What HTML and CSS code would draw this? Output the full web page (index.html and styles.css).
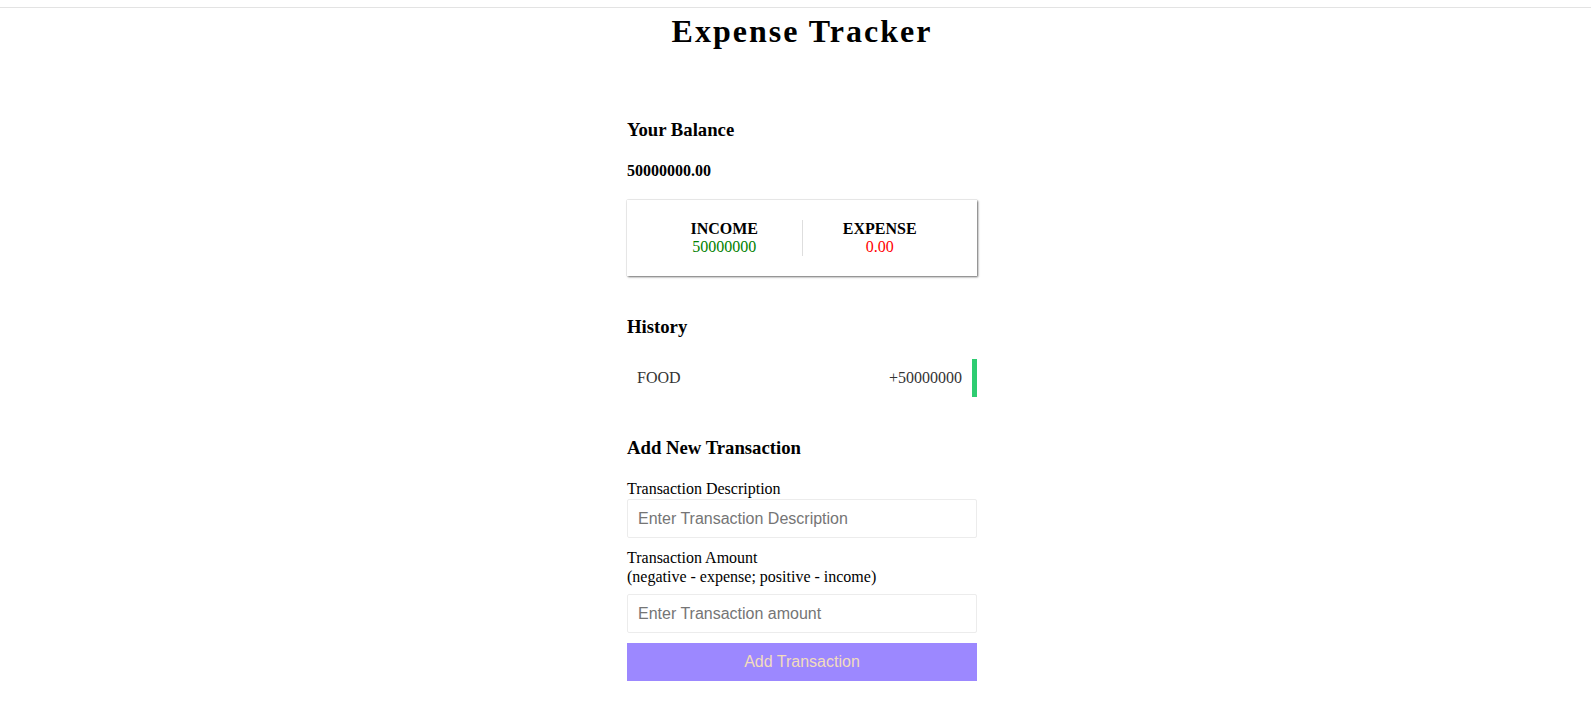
FILE: index.html
```html
<!DOCTYPE html>
<html lang="en">
<head>
<meta charset="utf-8">
<title>Expense Tracker</title>
<link rel="stylesheet" href="styles.css">
</head>
<body>
<div class="top-rule"></div>
<div class="app">
  <h2 class="title">Expense Tracker</h2>
  <div class="container">
    <h3 class="section-title first">Your Balance</h3>
    <h4 class="balance">50000000.00</h4>

    <div class="inc-exp">
      <div class="inc-exp-item with-divider">
        <div class="inc-exp-label">INCOME</div>
        <div class="money plus">50000000</div>
      </div>
      <div class="inc-exp-item">
        <div class="inc-exp-label">EXPENSE</div>
        <div class="money minus">0.00</div>
      </div>
    </div>

    <h3 class="section-title">History</h3>
    <ul class="list">
      <li class="list-item plus"><span>FOOD</span><span>+50000000</span></li>
    </ul>

    <h3 class="section-title">Add New Transaction</h3>
    <form class="form">
      <div class="form-control">
        <label class="label label-desc" for="text">Transaction Description</label>
        <input class="input" type="text" id="text" placeholder="Enter Transaction Description">
      </div>
      <div class="form-control">
        <label class="label label-amount" for="amount">Transaction Amount<br>(negative - expense; positive - income)</label>
        <input class="input" type="number" id="amount" placeholder="Enter Transaction amount">
      </div>
      <button class="btn" type="button">Add Transaction</button>
    </form>
  </div>
</div>
</body>
</html>
```

FILE: styles.css
```css
* {
  box-sizing: border-box;
}

html, body {
  margin: 0;
  padding: 0;
  background: #fff;
}

body {
  font-family: "Liberation Serif", "Times New Roman", serif;
  color: #000;
}

.top-rule {
  margin-top: 7px;
  height: 1px;
  background: #e3e3e3;
}

.app {
  padding-left: 13px;
}

.title {
  margin: 5px 0 0;
  font-size: 32px;
  line-height: 36px;
  font-weight: bold;
  letter-spacing: 2px;
  text-align: center;
}

.container {
  width: 350px;
  margin: 0 auto;
}

.section-title {
  margin: 40px 0 0;
  font-size: 18.72px;
  line-height: 22px;
  font-weight: bold;
}

.section-title.first {
  margin-top: 70px;
}

.balance {
  margin: 21px 0 0;
  font-size: 16px;
  line-height: 18px;
  font-weight: bold;
}

.inc-exp {
  margin-top: 20px;
  padding: 20px;
  display: flex;
  background: #fff;
  box-shadow: 1px 1px 2px rgba(0, 0, 0, 0.55), 0 0 1px rgba(0, 0, 0, 0.35);
}

.inc-exp-item {
  flex: 1;
  text-align: center;
  font-size: 16px;
  line-height: 18px;
}

.inc-exp-item.with-divider {
  border-right: 1px solid #dedede;
}

.inc-exp-label {
  font-weight: bold;
}

.money.plus {
  color: #008000;
}

.money.minus {
  color: #ff0000;
}

.list {
  list-style: none;
  margin: 21px 0 0;
  padding: 0;
}

.list-item {
  display: flex;
  justify-content: space-between;
  padding: 10px;
  font-size: 16px;
  line-height: 18px;
  color: #333;
}

.list-item.plus {
  border-right: 5px solid #2ecc71;
}

.form {
  margin-top: 21px;
}

.form-control {
  margin-top: 10px;
}

.form-control:first-child {
  margin-top: 0;
}

.label {
  display: block;
  font-size: 16px;
  line-height: 18px;
}

.label-desc {
  margin-bottom: 1px;
}

.label-amount {
  line-height: 19px;
  margin-bottom: 8px;
}

.input {
  display: block;
  width: 100%;
  height: 39px;
  padding: 0 10px;
  border: 1px solid #ececec;
  border-radius: 2px;
  font-family: "Liberation Sans", Arial, sans-serif;
  font-size: 16px;
  color: #333;
  background: #fff;
  outline: none;
}

.input::placeholder {
  color: #757575;
}

.btn {
  display: block;
  width: 100%;
  height: 38px;
  margin-top: 10px;
  border: 0;
  background: #9c88ff;
  color: #f2dcbc;
  font-family: "Liberation Sans", Arial, sans-serif;
  font-size: 16px;
  cursor: pointer;
}
```
